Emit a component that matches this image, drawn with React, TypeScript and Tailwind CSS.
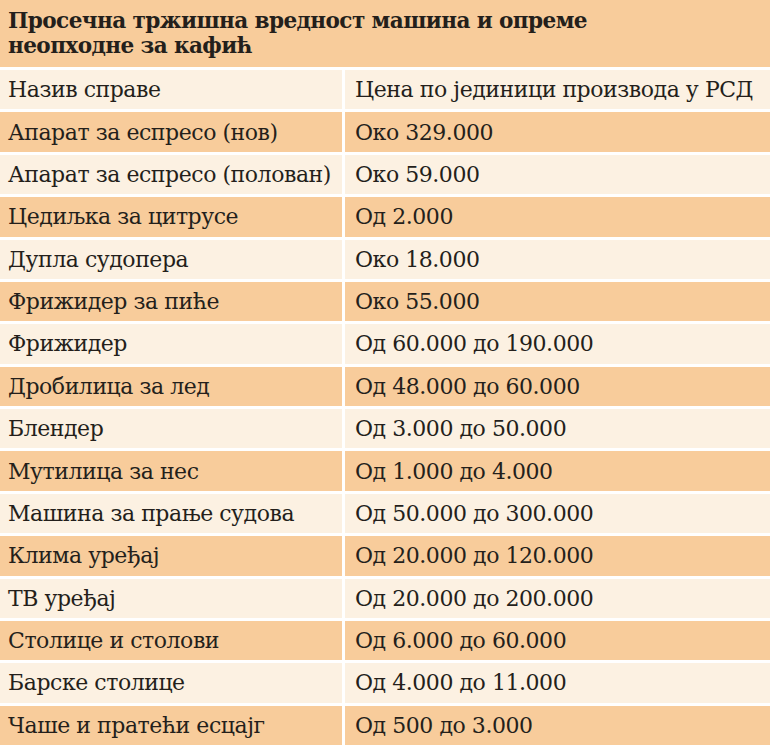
const rows: [string, string][] = [
  ["Апарат за еспресо (нов)", "Око 329.000"],
  ["Апарат за еспресо (полован)", "Око 59.000"],
  ["Цедиљка за цитрусе", "Од 2.000"],
  ["Дупла судопера", "Око 18.000"],
  ["Фрижидер за пиће", "Око 55.000"],
  ["Фрижидер", "Од 60.000 до 190.000"],
  ["Дробилица за лед", "Од 48.000 до 60.000"],
  ["Блендер", "Од 3.000 до 50.000"],
  ["Мутилица за нес", "Од 1.000 до 4.000"],
  ["Машина за прање судова", "Од 50.000 до 300.000"],
  ["Клима уређај", "Од 20.000 до 120.000"],
  ["ТВ уређај", "Од 20.000 до 200.000"],
  ["Столице и столови", "Од 6.000 до 60.000"],
  ["Барске столице", "Од 4.000 до 11.000"],
  ["Чаше и пратећи есцајг", "Од 500 до 3.000"],
];

export default function App() {
  return (
    <div className="flex h-[745px] w-[770px] flex-col gap-[3px] bg-white font-['DejaVu_Serif',serif] text-[#241f1b]">
      <div className="h-[67px] bg-[#f8cc9b] px-[8px] pt-[8px] text-[21.6px] font-bold leading-[25px] tracking-[-0.6px]">
        Просечна тржишна вредност машина и опреме
        <br />
        неопходне за кафић
      </div>
      <div className="grid flex-1 grid-cols-[342px_1fr] grid-rows-[repeat(16,1fr)] gap-x-[3px] gap-y-[3px] text-[22px] tracking-[-0.45px]">
        <div className="flex items-center bg-[#fcf1e2] px-[8px]">Назив справе</div>
        <div className="flex items-center bg-[#fcf1e2] px-[10px]">Цена по јединици производа у РСД</div>
        {rows.map(([name, price], i) => {
          const bg = i % 2 === 0 ? "bg-[#f8cc9b]" : "bg-[#fcf1e2]";
          return [
            <div key={`n${i}`} className={`flex items-center px-[8px] ${bg}`}>
              {name}
            </div>,
            <div key={`p${i}`} className={`flex items-center px-[10px] ${bg}`}>
              {price}
            </div>,
          ];
        })}
      </div>
    </div>
  );
}
